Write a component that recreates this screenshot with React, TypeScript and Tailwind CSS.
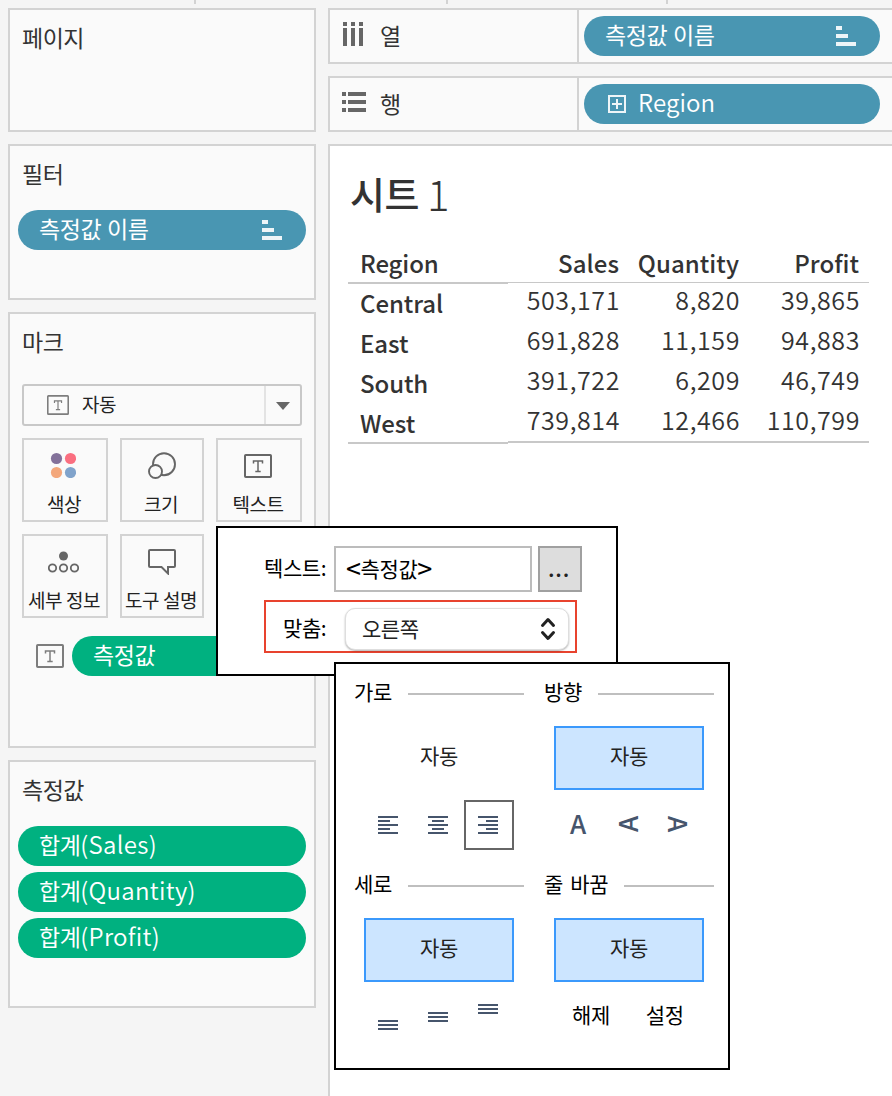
import type { ReactNode } from 'react';

const FONT = "font-['Noto_Sans_CJK_KR',sans-serif]";

const measures = ['Sales', 'Quantity', 'Profit'];

const regions = [
  { name: 'Central', values: ['503,171', '8,820', '39,865'] },
  { name: 'East', values: ['691,828', '11,159', '94,883'] },
  { name: 'South', values: ['391,722', '6,209', '46,749'] },
  { name: 'West', values: ['739,814', '12,466', '110,799'] },
];

function Panel({ title, className, children }: { title: string; className: string; children?: ReactNode }) {
  return (
    <section className={`border-2 border-[#d3d3d3] bg-[#fafafa] ${className}`}>
      <h2 className="ml-3 mt-3 h-8 text-[23px] leading-[31px] tracking-[-0.5px]">{title}</h2>
      {children}
    </section>
  );
}

function SortIcon() {
  return (
    <svg width="20" height="20" viewBox="0 0 20 20" fill="#eef5f8">
      <path d="M0 0h6v4H0zM0 8h12v4H0zM0 16h20v4H0z" />
    </svg>
  );
}

function TextIcon({ small, color = '#666666' }: { small?: boolean; color?: string }) {
  return (
    <svg width={small ? 22 : 28} height={small ? 20 : 24} viewBox="0 0 28 24" preserveAspectRatio="none" fill="none" stroke={color}>
      <rect x="1" y="1" width="26" height="22" rx="0.8" strokeWidth="2" />
      <path d="M9.5 9.5V7h9v2.5M14 7v10.5M11.3 17.4h5.4" strokeWidth="1.5" />
    </svg>
  );
}

function MarkButton({ label, className, children }: { label: string; className: string; children: ReactNode }) {
  return (
    <button className={`flex h-[84px] flex-col items-center border-2 border-[#d3d3d3] bg-[#fafafa] ${className}`}>
      <span className="flex h-[52px] flex-none items-center justify-center">{children}</span>
      <span className="mr-[2px] whitespace-nowrap text-[19px] leading-[24px] tracking-[-0.4px] text-[#222]">{label}</span>
    </button>
  );
}

function Lines({ rows }: { rows: [number, number][] }) {
  return (
    <svg width="20" height={rows.length * 4 - 2} fill="#46556c">
      {rows.map(([x, w], i) => (
        <rect key={i} x={x} y={i * 4} width={w} height="2" />
      ))}
    </svg>
  );
}

function GroupTitle({ children }: { children: ReactNode }) {
  return (
    <div className="flex h-8 items-center gap-4 text-[21px] leading-[30px] tracking-[-0.4px] text-black [word-spacing:3px]">
      <span className="whitespace-nowrap pb-[2px]">{children}</span>
      <span className="mt-[4px] h-[2px] flex-1 bg-[#bfbfbf]" />
    </div>
  );
}

function AutoButton({ selected }: { selected?: boolean }) {
  return (
    <button
      className={`mx-[10px] flex h-16 w-[150px] items-center justify-center border-2 pb-[5px] text-[21px] tracking-[-0.4px] text-[#222] ${
        selected ? 'border-[#3b99fc] bg-[#cce5ff]' : 'border-transparent'
      }`}
    >
      자동
    </button>
  );
}

function Shelf({ icon, label, children }: { icon: ReactNode; label: string; children: ReactNode }) {
  return (
    <div className="flex h-14 w-[570px] border-2 border-[#d3d3d3] bg-[#fafafa]">
      <div className="flex w-[249px] items-center border-r-2 border-[#d3d3d3] pl-[11px]">
        <span className="w-[39px]">{icon}</span>
        <span className="pb-[2px] text-[23px] leading-[32px]">{label}</span>
      </div>
      <div className="ml-[5px] mt-[6px] flex h-10 w-[296px] items-center rounded-full bg-[#4996b2] text-white">{children}</div>
    </div>
  );
}

function Sidebar() {
  return (
    <aside className="flex w-[308px] flex-none flex-col gap-3">
      <Panel title="페이지" className="h-[124px]" />
      <Panel title="필터" className="h-[156px]">
        <div className="ml-2 mt-5 flex h-10 w-[288px] items-center justify-between rounded-full bg-[#4996b2] pl-[21px] pr-6 text-[23px] tracking-[-0.4px] text-white [word-spacing:1px]">
          <span className="pb-1">측정값 이름</span>
          <SortIcon />
        </div>
      </Panel>
      <Panel title="마크" className="h-[436px]">
        <div className="ml-3 mt-[26px] flex h-[42px] w-[280px] items-center rounded-[3px] border-2 border-[#c8c8c8]">
          <span className="ml-[23px] w-[35px]">
            <TextIcon small color="#7d7d7d" />
          </span>
          <span className="flex-1 pb-[2px] text-[19px] leading-[28px] tracking-[-0.5px] text-[#222]">자동</span>
          <span className="flex h-full w-[36px] items-center justify-center border-l-2 border-[#e3e3e3]">
            <svg width="14" height="8" className="mt-[2px]">
              <path d="M0 0h14L7 8z" fill="#666" />
            </svg>
          </span>
        </div>
        <div className="ml-3 mt-3 grid w-[280px] grid-cols-[86px_84px_86px] gap-3">
          <MarkButton label="색상" className="w-[86px]">
            <svg width="26" height="26" className="mb-[2px] mr-1">
              <circle cx="6.5" cy="6.5" r="5.6" fill="#83719a" />
              <circle cx="20.5" cy="6.5" r="5.6" fill="#fa6f80" />
              <circle cx="6.5" cy="20.5" r="5.6" fill="#f3a77b" />
              <circle cx="20.5" cy="20.5" r="5.6" fill="#80a3cb" />
            </svg>
          </MarkButton>
          <MarkButton label="크기" className="w-[84px]">
            <svg width="28" height="28" fill="none" stroke="#666" strokeWidth="1.9">
              <circle cx="16" cy="12.2" r="11" />
              <circle cx="7.5" cy="19.5" r="6.5" fill="#fafafa" />
            </svg>
          </MarkButton>
          <MarkButton label="텍스트" className="w-[86px]">
            <span className="mr-[2px]">
              <TextIcon />
            </span>
          </MarkButton>
          <MarkButton label="세부 정보" className="w-[86px]">
            <svg width="31" height="22" className="mr-[3px]" fill="none" stroke="#666" strokeWidth="1.8">
              <circle cx="15.5" cy="5" r="4.5" fill="#666" stroke="none" />
              <circle cx="4.5" cy="17" r="3.7" />
              <circle cx="15.5" cy="17" r="3.7" />
              <circle cx="26.5" cy="17" r="3.7" />
            </svg>
          </MarkButton>
          <MarkButton label="도구 설명" className="w-[84px]">
            <svg width="28" height="26" fill="none" stroke="#666" strokeWidth="2">
              <path d="M2 1h24q1 0 1 1v15q0 1-1 1h-6v6.5L13.5 18H2q-1 0-1-1V2q0-1 1-1z" />
            </svg>
          </MarkButton>
        </div>
        <div className="ml-[26px] mt-[18px] flex items-center gap-2">
          <TextIcon color="#7d7d7d" />
          <div className="flex h-10 w-[234px] items-center rounded-l-full bg-[#00b180] pl-[21px] text-[23px] tracking-[-0.4px] text-white">
            <span className="pb-1">측정값</span>
          </div>
        </div>
      </Panel>
      <Panel title="측정값" className="h-[248px]">
        <div className="ml-2 mt-5 flex w-[288px] flex-col gap-[6px]">
          {measures.map((m) => (
            <div key={m} className="flex h-10 items-center rounded-full bg-[#00b180] pl-[21px] text-[23px] text-white">
              <span className="pb-[5px]">
                <span className="tracking-[-0.5px]">합계</span>
                <span className="text-[24px] font-[350] tracking-[0.3px]">({m})</span>
              </span>
            </div>
          ))}
        </div>
      </Panel>
    </aside>
  );
}

function CrossTab() {
  return (
    <div className="ml-[18px] mt-[26px] flex w-[521px] text-[#333]">
      <div className="w-[160px] flex-none">
        <div className="h-[40px] border-b-2 border-[#c8c8c8] pl-3 text-[24px] font-medium leading-[37px] tracking-[-0.1px]">Region</div>
        <div className="h-[160px] border-b-2 border-[#c8c8c8] pl-3">
          {regions.map((r) => (
            <div key={r.name} className="h-10 text-[24px] font-medium leading-[37px] tracking-[-0.1px]">
              {r.name}
            </div>
          ))}
        </div>
      </div>
      <div className="w-[361px] flex-none">
        <div className="grid h-[39px] grid-cols-[111px_120px_120px] border-b border-[#c8c8c8] text-right text-[24px] font-medium leading-[37px] tracking-[0.05px]">
          {measures.map((m) => (
            <span key={m}>{m}</span>
          ))}
        </div>
        <div className="h-[160px] border-b-2 border-[#c8c8c8]">
          {regions.map((r) => (
            <div key={r.name} className="grid h-10 grid-cols-[112px_120px_120px] text-right text-[25px] font-[350] leading-[33px] tracking-[0.6px]">
              {r.values.map((v) => (
                <span key={v}>{v}</span>
              ))}
            </div>
          ))}
        </div>
      </div>
    </div>
  );
}

function TextPopup() {
  return (
    <div className="absolute left-[216px] top-[526px] h-[150px] w-[402px] border-2 border-black bg-white pl-[46px] pt-[18px] text-[21px] text-black">
      <div className="flex h-[46px]">
        <span className="w-[70px] whitespace-nowrap leading-[42px] tracking-[-0.4px]">텍스트:</span>
        <div className="flex w-[198px] border-2 border-[#bcbcbc] pl-[10px] leading-[40px] tracking-[-0.4px]">
          <span className="text-[27px] leading-[40px]">&lt;</span>
          측정값
          <span className="text-[27px] leading-[40px]">&gt;</span>
        </div>
        <button className="ml-[6px] w-11 border-2 border-[#a0a0a0] bg-[#dddddd] pb-1 pr-[2px] text-[22px] font-medium leading-[38px] tracking-[0.8px] text-[#222]">...</button>
      </div>
      <div className="mt-2 flex h-[53px] w-[313px] border-2 border-[#e8432e] pl-[17px] pt-[6px]">
        <span className="w-[62px] leading-[38px] tracking-[-0.4px]">맞춤:</span>
        <div className="flex h-[42px] w-[224px] flex-none items-center justify-between rounded-[10px] border border-[#dedede] bg-white pl-4 pr-3 text-[#222] shadow-[0_1px_2px_rgba(0,0,0,0.3)]">
          <span className="tracking-[-0.5px]">오른쪽</span>
          <svg width="16" height="24" fill="none" stroke="#222" strokeWidth="3" strokeLinecap="round" strokeLinejoin="round">
            <path d="M2.5 8.5 8 2.5l5.5 6M2.5 15.5l5.5 6 5.5-6" />
          </svg>
        </div>
      </div>
    </div>
  );
}

function AlignPopup() {
  return (
    <div className="absolute left-[334px] top-[662px] grid h-[408px] w-[396px] grid-cols-[170px_170px] grid-rows-[192px_192px] gap-x-5 border-2 border-black bg-white pl-[18px] pt-[12px]">
      <div>
        <GroupTitle>가로</GroupTitle>
        <div className="mt-[18px]">
          <AutoButton />
        </div>
        <div className="ml-[10px] mt-[10px] flex h-[50px]">
          <span className="flex w-[50px] items-center pl-[14px]">
            <Lines rows={[[0, 20], [0, 12], [0, 20], [0, 12], [0, 20]]} />
          </span>
          <span className="flex w-[50px] items-center pl-[14px]">
            <Lines rows={[[0, 20], [4, 12], [0, 20], [4, 12], [0, 20]]} />
          </span>
          <span className="flex w-[50px] items-center border-2 border-[#666] pl-[12px]">
            <Lines rows={[[0, 20], [8, 12], [0, 20], [8, 12], [0, 20]]} />
          </span>
        </div>
      </div>
      <div>
        <GroupTitle>방향</GroupTitle>
        <div className="mt-[18px]">
          <AutoButton selected />
        </div>
        <div className="ml-[10px] mt-[10px] flex h-[50px] text-[26px] font-medium leading-[46px] text-[#46556c]">
          <span className="w-[48px] text-center">A</span>
          <span className="flex h-[48px] w-[51px] -rotate-90 items-center justify-center pb-[3px]">A</span>
          <span className="flex h-[48px] w-[50px] rotate-90 items-center justify-center pb-[3px]">A</span>
        </div>
      </div>
      <div>
        <GroupTitle>세로</GroupTitle>
        <div className="mt-[18px]">
          <AutoButton selected />
        </div>
        <div className="ml-6 mt-[22px] flex h-[26px] gap-[30px]">
          <span className="flex items-end"><Lines rows={[[0, 20], [0, 20], [0, 20]]} /></span>
          <span className="flex items-center"><Lines rows={[[0, 20], [0, 20], [0, 20]]} /></span>
          <span className="flex items-start"><Lines rows={[[0, 20], [0, 20], [0, 20]]} /></span>
        </div>
      </div>
      <div>
        <GroupTitle>줄 바꿈</GroupTitle>
        <div className="mt-[18px]">
          <AutoButton selected />
        </div>
        <div className="ml-7 mt-4 flex gap-9 text-[21px] leading-[32px] tracking-[-0.4px] text-black">
          <span>해제</span>
          <span>설정</span>
        </div>
      </div>
    </div>
  );
}

export default function App() {
  return (
    <div className={`relative h-[1096px] w-[892px] overflow-hidden bg-[#f5f5f5] text-[#333] ${FONT}`}>
      <div className="flex h-1">
        <span className="ml-[194px] w-[2px] bg-[#d3d3d3]" />
        <span className="ml-[250px] w-[2px] bg-[#d3d3d3]" />
        <span className="ml-[218px] w-[2px] bg-[#d3d3d3]" />
      </div>
      <div className="ml-2 mt-1 flex gap-3">
        <Sidebar />
        <main className="flex w-[570px] flex-none flex-col gap-3">
          <Shelf
            label="열"
            icon={
              <svg width="26" height="24" className="mb-1" fill="#666">
                <path d="M2 0h4v4H2zM10 0h4v4h-4zM18 0h4v4h-4zM2 6h4v18H2zM10 6h4v18h-4zM18 6h4v18h-4z" />
              </svg>
            }
          >
            <span className="ml-[21px] pb-1 text-[23px] tracking-[-0.4px] [word-spacing:1px]">측정값 이름</span>
            <span className="ml-auto mr-6">
              <SortIcon />
            </span>
          </Shelf>
          <Shelf
            label="행"
            icon={
              <svg width="26" height="20" className="mb-1" fill="#666">
                <path d="M1 0h4v4H1zM7 0h18v4H7zM1 8h4v4H1zM7 8h18v4H7zM1 16h4v4H1zM7 16h18v4H7z" />
              </svg>
            }
          >
            <svg width="18" height="18" className="ml-6" fill="none" stroke="#eef5f8" strokeWidth="2">
              <path d="M1 1h16v16H1zM9 4v10M4 9h10" />
            </svg>
            <span className="ml-3 pb-[5px] text-[24px] font-[350] tracking-[0.1px]">Region</span>
          </Shelf>
          <section className="h-[960px] border-2 border-[#d3d3d3] bg-white">
            <h1 className="ml-[20px] mt-[24px] flex h-[48px] items-center pb-[3px] text-[38px] font-medium leading-[48px] tracking-[-0.5px]">
              시트<span className="ml-[8px] text-[42px] font-light">1</span>
            </h1>
            <CrossTab />
          </section>
        </main>
      </div>
      <TextPopup />
      <AlignPopup />
    </div>
  );
}
